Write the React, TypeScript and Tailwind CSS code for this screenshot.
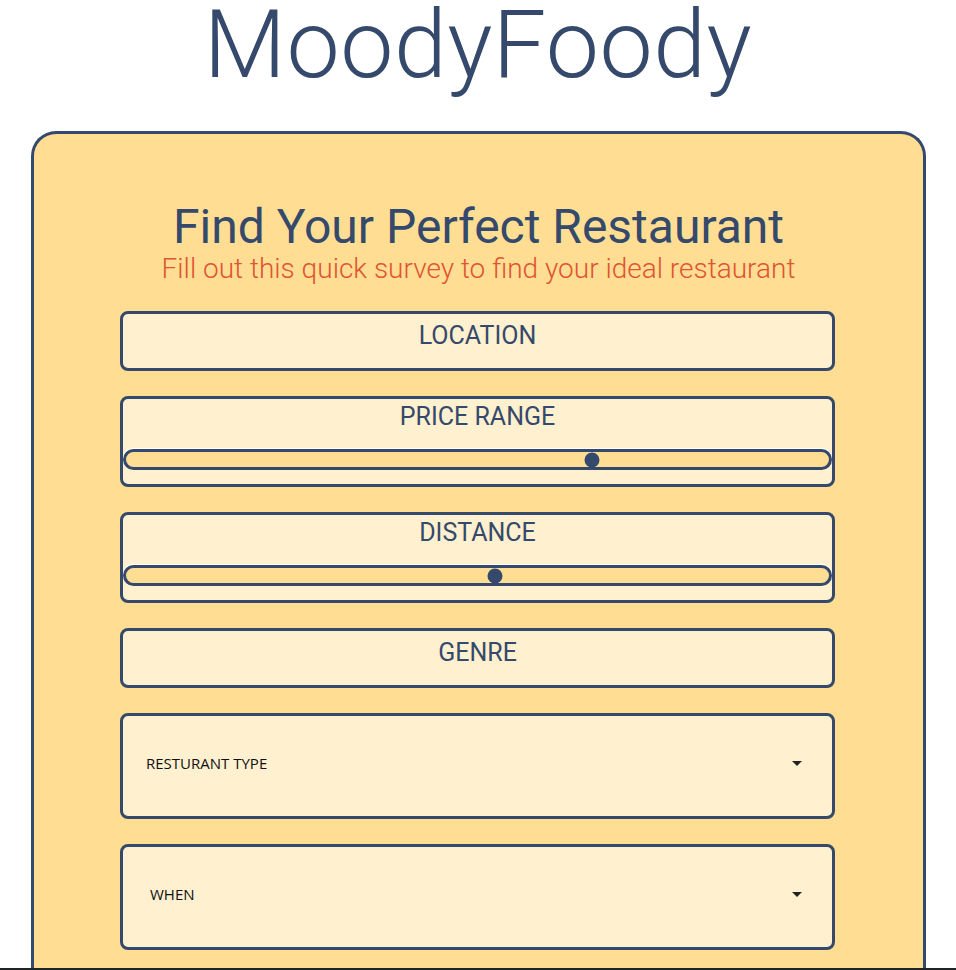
import React from "react";

function SliderField({ label, pos }: { label: string; pos: number }) {
  return (
    <div className="w-[715px] h-[91px] ml-[86px] border-[3px] border-[#34496b] rounded-[8px] bg-[#fff0cf] flex flex-col">
      <div className="text-center text-[25px] leading-[29px] mt-[3px] text-[#34496b]">{label}</div>
      <div className="relative mt-[18px] h-[21px] border-[3px] border-[#34496b] rounded-full bg-[#ffdd92] shadow-[0_-1px_0_#ffffff]">
        <div
          className="absolute top-1/2 w-[15px] h-[15px] rounded-full bg-[#34496b] -translate-x-1/2 -translate-y-1/2"
          style={{ left: `${pos}px` }}
        />
      </div>
    </div>
  );
}

function TextField({ label }: { label: string }) {
  return (
    <div className="w-[715px] h-[60px] ml-[86px] border-[3px] border-[#34496b] rounded-[8px] bg-[#fff0cf]">
      <div className="text-center text-[25px] leading-[29px] mt-[7px] text-[#34496b]">{label}</div>
    </div>
  );
}

function SelectField({ label, indent }: { label: string; indent: number }) {
  return (
    <div className="w-[715px] h-[106px] ml-[86px] border-[3px] border-[#34496b] rounded-[8px] bg-[#fff0cf] flex items-center justify-between pr-[30px] pb-[6px]">
      <span
        className="text-[15px] text-[#111] font-['Open_Sans',sans-serif]"
        style={{ paddingLeft: `${indent}px` }}
      >
        {label}
      </span>
      <span className="w-0 h-0 border-l-[5px] border-r-[5px] border-t-[5px] border-l-transparent border-r-transparent border-t-[#222]" />
    </div>
  );
}

export default function App() {
  return (
    <div className="min-h-[970px] bg-white font-['Roboto',sans-serif] overflow-hidden">
      <h1 className="text-center text-[95px] leading-[89px] font-light text-[#34496b] tracking-[0.5px]">
        MoodyFoody
      </h1>
      <div className="mt-[42px] ml-[31px] w-[895px] border-[3px] border-[#34496b] rounded-t-[25px] border-b-0 bg-[#ffdd92] pt-[65px] pb-[40px]">
        <h2 className="text-center text-[48px] leading-[56px] text-[#34496b]">Find Your Perfect Restaurant</h2>
        <p className="text-center text-[28px] leading-[30px] font-light text-[#e05434] -mt-[1px]">
          Fill out this quick survey to find your ideal restaurant
        </p>
        <div className="mt-[27px] flex flex-col gap-[25px]">
          <TextField label="LOCATION" />
          <SliderField label="PRICE RANGE" pos={466} />
          <SliderField label="DISTANCE" pos={369} />
          <TextField label="GENRE" />
          <SelectField label="RESTURANT TYPE" indent={23} />
          <SelectField label="WHEN" indent={27} />
        </div>
      </div>
      <div className="fixed bottom-0 left-0 right-0 h-[2px] bg-[#1f2424]" />
    </div>
  );
}
